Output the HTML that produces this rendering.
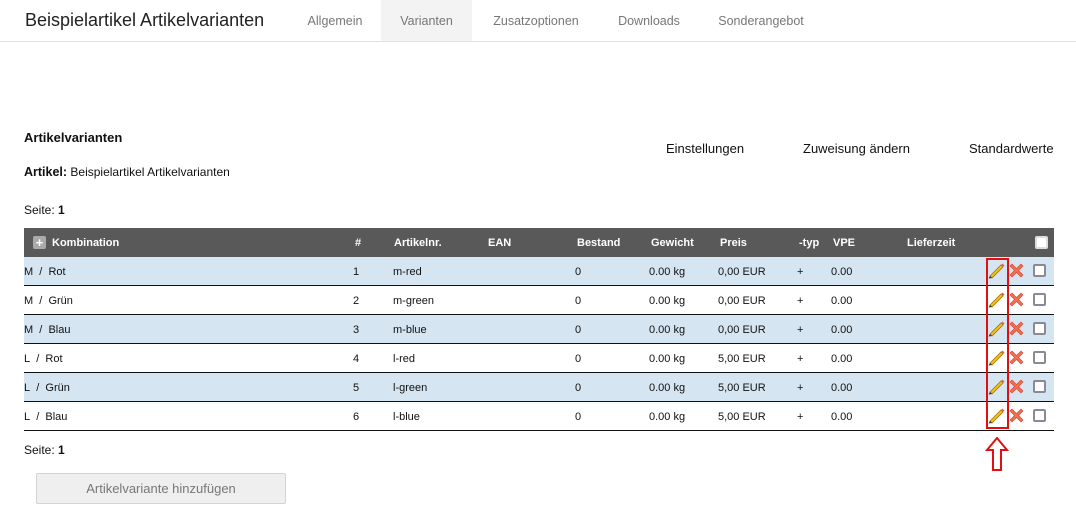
<!DOCTYPE html>
<html><head><meta charset="utf-8"><style>
*{margin:0;padding:0;box-sizing:border-box}
body{width:1076px;height:518px;position:relative;background:#fff;font-family:"Liberation Sans",sans-serif;color:#111;overflow:hidden}
.a{position:absolute;white-space:nowrap}
.hdr{position:absolute;left:0;top:0;width:1076px;height:42px;border-bottom:1px solid #e2e2e2}
.tab{position:absolute;top:0;height:41px;line-height:43px;font-size:12.5px;color:#777;text-align:center}
.th{position:absolute;left:24px;top:228px;width:1030px;height:29px;background:#595959}
.th span{position:absolute;top:9px;font-size:11px;font-weight:bold;color:#fff}
.row{position:absolute;left:24px;width:1030px;height:29px;border-bottom:1px solid #111}
.row span{position:absolute;top:9px;font-size:11px;color:#111}
.blue{background:#d6e5f2}
.cb{position:absolute;width:13px;height:13px;border:2px solid #8a8a96;border-radius:2px;background:#fff}
</style></head><body>
<div class="hdr"></div>
<div class="a" style="left:25px;top:10px;font-size:18px;color:#222">Beispielartikel Artikelvarianten</div>
<div class="tab" style="left:290px;width:90px">Allgemein</div>
<div class="tab" style="left:381px;width:91px;background:#f3f3f3">Varianten</div>
<div class="tab" style="left:480px;width:112px">Zusatzoptionen</div>
<div class="tab" style="left:605px;width:88px">Downloads</div>
<div class="tab" style="left:705px;width:112px">Sonderangebot</div>

<div class="a" style="left:24px;top:130px;font-size:13px;font-weight:bold">Artikelvarianten</div>
<div class="a" style="left:24px;top:165px;font-size:12px"><b style="font-size:12.5px">Artikel:</b> Beispielartikel Artikelvarianten</div>
<div class="a" style="left:666px;top:141px;font-size:13px">Einstellungen</div>
<div class="a" style="left:803px;top:141px;font-size:13px">Zuweisung ändern</div>
<div class="a" style="left:969px;top:141px;font-size:13px">Standardwerte</div>
<div class="a" style="left:24px;top:203px;font-size:12px">Seite: <b>1</b></div>

<div class="th">
<div style="position:absolute;left:9px;top:8px;width:13px;height:13px;background:#aaa;border-radius:2px;color:#fff;font-size:13px;font-weight:bold;line-height:13px;text-align:center">+</div>
<span style="left:28px">Kombination</span><span style="left:331px">#</span><span style="left:370px">Artikelnr.</span><span style="left:464px">EAN</span><span style="left:553px">Bestand</span><span style="left:627px">Gewicht</span><span style="left:696px">Preis</span><span style="left:775px">-typ</span><span style="left:809px">VPE</span><span style="left:883px">Lieferzeit</span>
<div class="cb" style="left:1011px;top:8px;border-color:#ddd"></div>
</div>

<div id="rows"></div>
<script>
var d=[["M / Rot",1,"m-red","0,00"],["M / Grün",2,"m-green","0,00"],["M / Blau",3,"m-blue","0,00"],["L / Rot",4,"l-red","5,00"],["L / Grün",5,"l-green","5,00"],["L / Blau",6,"l-blue","5,00"]];
var h="";
d.forEach(function(r,i){
h+='<div class="row'+(i%2==0?' blue':'')+'" style="top:'+(257+i*29)+'px"><span style="left:0">'+r[0].replace(" / ","&nbsp; / &nbsp;")+'</span><span style="left:329px">'+r[1]+'</span><span style="left:369px">'+r[2]+'</span><span style="left:551px">0</span><span style="left:625px">0.00 kg</span><span style="left:694px">'+r[3]+' EUR</span><span style="left:773px">+</span><span style="left:807px">0.00</span>'+
'<svg style="position:absolute;left:963px;top:4px" width="18" height="18" viewBox="0 0 18 18"><path d="M3 15 L14 4 L16 6 L5 17 Z" fill="#f0c020" stroke="#a07800" stroke-width="0.8"/><path d="M14 4 L15.5 2.5 L17.5 4.5 L16 6Z" fill="#e06060"/><path d="M3 15 L5 17 L1.5 17.5Z" fill="#333"/></svg>'+
'<svg style="position:absolute;left:984px;top:5px" width="17" height="17" viewBox="0 0 17 17"><path d="M2 4 L4 2 L8.5 6.5 L13 2 L15 4 L10.5 8.5 L15 13 L13 15 L8.5 10.5 L4 15 L2 13 L6.5 8.5Z" fill="#f07050" stroke="#d04030" stroke-width="0.6"/></svg>'+
'<div class="cb" style="left:1009px;top:7px"></div></div>';
});
document.getElementById("rows").innerHTML=h;
</script>
<div class="a" style="left:986px;top:258px;width:23px;height:171px;border:2px solid #e01010"></div>
<svg class="a" style="left:985px;top:437px" width="24" height="34" viewBox="0 0 24 34"><path d="M12 1 L22 13 L16 13 L16 33 L8 33 L8 13 L2 13 Z" fill="#fff" stroke="#e01010" stroke-width="2"/></svg>
<div class="a" style="left:24px;top:443px;font-size:12px">Seite: <b>1</b></div>
<div class="a" style="left:36px;top:473px;width:250px;height:31px;background:#efefef;border:1px solid #d4d4d4;border-radius:2px;text-align:center;line-height:29px;font-size:13px;color:#777">Artikelvariante hinzufügen</div>
</body></html>
